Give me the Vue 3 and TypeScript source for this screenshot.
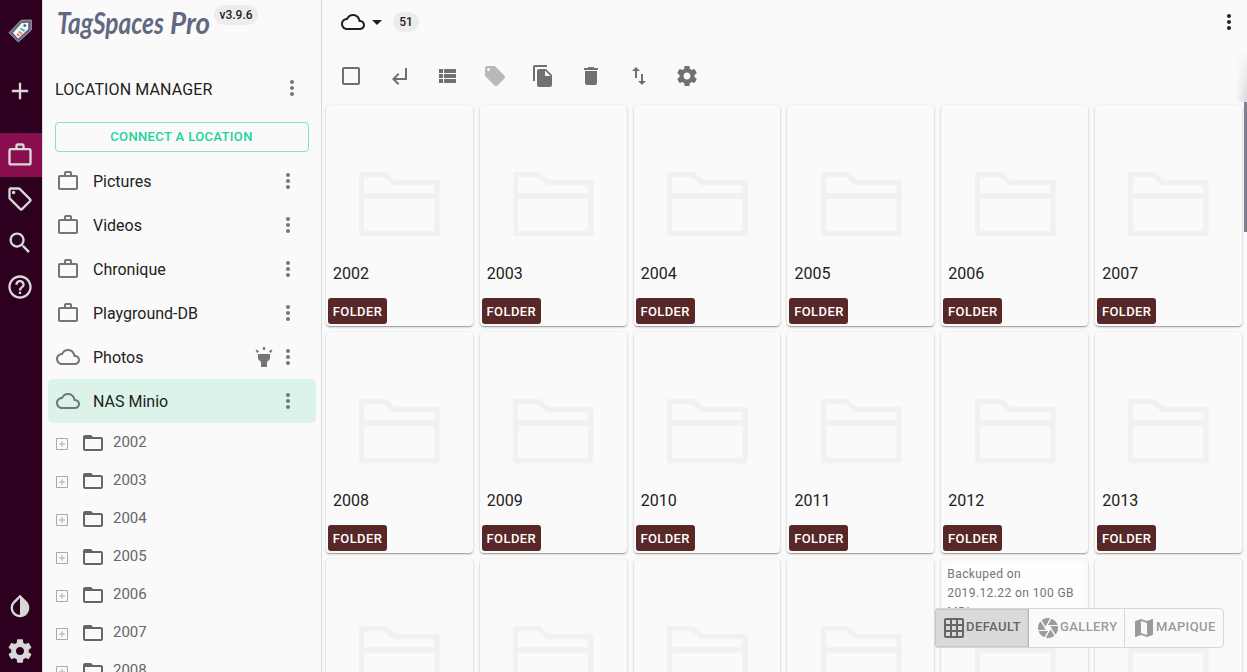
<script setup lang="ts">
interface Location { name: string; cloud?: boolean; lit?: boolean; selected?: boolean }
interface Action { id: string; faded?: boolean }

const icons: Record<string, string> = {
  add: 'M19 13h-6v6h-2v-6H5v-2h6V5h2v6h6v2z',
  work: 'M14 6V4h-4v2h4zM4 8v11h16V8H4zm16-2c1.11 0 2 .89 2 2v11c0 1.11-.89 2-2 2H4c-1.11 0-2-.89-2-2l.01-11c0-1.11.88-2 1.99-2h4V4c0-1.11.89-2 2-2h4c1.11 0 2 .89 2 2v2h4z',
  tagOutline: 'M21.41 11.58l-9-9C12.05 2.22 11.55 2 11 2H4c-1.1 0-2 .9-2 2v7c0 .55.22 1.05.59 1.42l9 9c.36.36.86.58 1.41.58s1.05-.22 1.41-.59l7-7c.37-.36.59-.86.59-1.41s-.23-1.06-.59-1.42zM13 20.01L4 11V4h7v-.01l9 9-7 7.02zM6.5 5a1.5 1.5 0 1 0 0 3 1.5 1.5 0 0 0 0-3z',
  search: 'M15.5 14h-.79l-.28-.27C15.41 12.59 16 11.11 16 9.5 16 5.91 13.09 3 9.5 3S3 5.91 3 9.5 5.91 16 9.5 16c1.61 0 3.09-.59 4.23-1.57l.27.28v.79l5 4.99L20.49 19l-4.99-5zm-6 0C7.01 14 5 11.99 5 9.5S7.01 5 9.5 5 14 7.01 14 9.5 11.99 14 9.5 14z',
  help: 'M11 18h2v-2h-2v2zm1-16C6.48 2 2 6.48 2 12s4.48 10 10 10 10-4.48 10-10S17.52 2 12 2zm0 18c-4.41 0-8-3.59-8-8s3.59-8 8-8 8 3.59 8 8-3.59 8-8 8zm0-14c-2.21 0-4 1.79-4 4h2c0-1.1.9-2 2-2s2 .9 2 2c0 2-3 1.75-3 5h2c0-2.25 3-2.5 3-5 0-2.21-1.79-4-4-4z',
  invert: 'M17.66 7.93L12 2.27 6.34 7.93c-3.12 3.12-3.12 8.19 0 11.31C7.9 20.8 9.95 21.58 12 21.58c2.05 0 4.1-.78 5.66-2.34 3.12-3.12 3.12-8.19 0-11.31zM12 19.59c-1.6 0-3.11-.62-4.24-1.76C6.62 16.69 6 15.19 6 13.59s.62-3.11 1.76-4.24L12 5.1v14.49z',
  settings: 'M19.43 12.98c.04-.32.07-.64.07-.98s-.03-.66-.07-.98l2.11-1.65c.19-.15.24-.42.12-.64l-2-3.46c-.12-.22-.39-.3-.61-.22l-2.49 1c-.52-.4-1.08-.73-1.69-.98l-.38-2.65C14.46 2.18 14.25 2 14 2h-4c-.25 0-.46.18-.49.42l-.38 2.65c-.61.25-1.17.59-1.69.98l-2.49-1c-.23-.09-.49 0-.61.22l-2 3.46c-.13.22-.07.49.12.64l2.11 1.65c-.04.32-.07.65-.07.98s.03.66.07.98l-2.11 1.65c-.19.15-.24.42-.12.64l2 3.46c.12.22.39.3.61.22l2.49-1c.52.4 1.08.73 1.69.98l.38 2.65c.03.24.24.42.49.42h4c.25 0 .46-.18.49-.42l.38-2.65c.61-.25 1.17-.59 1.69-.98l2.49 1c.23.09.49 0 .61-.22l2-3.46c.12-.22.07-.49-.12-.64l-2.11-1.65zM12 15.5c-1.93 0-3.5-1.57-3.5-3.5s1.57-3.5 3.5-3.5 3.5 1.57 3.5 3.5-1.57 3.5-3.5 3.5z',
  cloud: 'M19.35 10.04C18.67 6.59 15.64 4 12 4 9.11 4 6.6 5.64 5.35 8.04 2.34 8.36 0 10.91 0 14c0 3.31 2.69 6 6 6h13c2.76 0 5-2.24 5-5 0-2.64-2.05-4.78-4.65-4.96zM19 18H6c-2.21 0-4-1.79-4-4 0-2.05 1.53-3.76 3.56-3.97l1.07-.11.5-.95C8.08 7.14 9.94 6 12 6c2.62 0 4.88 1.86 5.39 4.43l.3 1.5 1.53.11c1.56.1 2.78 1.41 2.78 2.96 0 1.65-1.35 3-3 3z',
  more: 'M12 8c1.1 0 2-.9 2-2s-.9-2-2-2-2 .9-2 2 .9 2 2 2zm0 2c-1.1 0-2 .9-2 2s.9 2 2 2 2-.9 2-2-.9-2-2-2zm0 6c-1.1 0-2 .9-2 2s.9 2 2 2 2-.9 2-2-.9-2-2-2z',
  highlight: 'M6 14l3 3v5h6v-5l3-3V9H6zm5-12h2v3h-2zM3.5 5.875L4.914 4.46l2.12 2.122L5.62 7.997zm13.46.71l2.123-2.12 1.414 1.414L18.375 8z',
  folder: 'M20 6h-8l-2-2H4c-1.1 0-1.99.9-1.99 2L2 18c0 1.1.9 2 2 2h16c1.1 0 2-.9 2-2V8c0-1.1-.9-2-2-2zm0 12H4V8h16v10z',
  drop: 'M7 10l5 5 5-5z',
  checkbox: 'M19 5v14H5V5h14m0-2H5c-1.1 0-2 .9-2 2v14c0 1.1.9 2 2 2h14c1.1 0 2-.9 2-2V5c0-1.1-.9-2-2-2z',
  parent: 'M11 9l1.42 1.42L8.83 14H18V4h2v12H8.83l3.59 3.58L11 21l-6-6 6-6z',
  list: 'M4 14h4v-4H4v4zm0 5h4v-4H4v4zM4 9h4V5H4v4zm5 5h12v-4H9v4zm0 5h12v-4H9v4zM9 5v4h12V5H9z',
  tag: 'M21.41 11.58l-9-9C12.05 2.22 11.55 2 11 2H4c-1.1 0-2 .9-2 2v7c0 .55.22 1.05.59 1.42l9 9c.36.36.86.58 1.41.58.55 0 1.05-.22 1.41-.59l7-7c.37-.36.59-.86.59-1.41 0-.55-.23-1.06-.59-1.42zM5.5 7C4.67 7 4 6.33 4 5.5S4.67 4 5.5 4 7 4.67 7 5.5 6.33 7 5.5 7z',
  copy: 'M16 1H4c-1.1 0-2 .9-2 2v14h2V3h12V1zm-1 4l6 6v10c0 1.1-.9 2-2 2H7.99C6.89 23 6 22.1 6 21l.01-14c0-1.1.89-2 1.99-2h7zm-1 7h5.5L14 6.5V12z',
  trash: 'M6 19c0 1.1.9 2 2 2h8c1.1 0 2-.9 2-2V7H6v12zM19 4h-3.5l-1-1h-5l-1 1H5v2h14V4z',
  sort: 'M16 17.01V10h-2v7.01h-3L15 21l4-3.99h-3zM9 3L5 6.99h3V14h2V6.99h3L9 3z',
  grid: 'M20 2H4c-1.1 0-2 .9-2 2v16c0 1.1.9 2 2 2h16c1.1 0 2-.9 2-2V4c0-1.1-.9-2-2-2zM8 20H4v-4h4v4zm0-6H4v-4h4v4zm0-6H4V4h4v4zm6 12h-4v-4h4v4zm0-6h-4v-4h4v4zm0-6h-4V4h4v4zm6 12h-4v-4h4v4zm0-6h-4v-4h4v4zm0-6h-4V4h4v4z',
  camera: 'M9.4 10.5l4.77-8.26C13.47 2.09 12.75 2 12 2c-2.4 0-4.6.85-6.32 2.25l3.66 6.35.06-.1zM21.54 9c-.92-2.92-3.15-5.26-6-6.34L11.88 9h9.66zm.26 1h-7.49l.29.5 4.76 8.25C21 16.97 22 14.61 22 12c0-.69-.07-1.35-.2-2zM8.54 12l-3.9-6.75C3.01 7.03 2 9.39 2 12c0 .69.07 1.35.2 2h7.49l-1.15-2zm-6.08 3c.92 2.92 3.15 5.26 6 6.34L12.12 15H2.46zm11.27 0l-3.9 6.76c.7.15 1.42.24 2.17.24 2.4 0 4.6-.85 6.32-2.25l-3.66-6.35-.93 1.6z',
  map: 'M20.5 3l-.16.03L15 5.1 9 3 3.36 4.9c-.21.07-.36.25-.36.48V20.5c0 .28.22.5.5.5l.16-.03L9 18.9l6 2.1 5.64-1.9c.21-.07.36-.25.36-.48V3.5c0-.28-.22-.5-.5-.5zM15 19l-6-2.11V5l6 2.11V19z',
}

const nav: string[] = ['work', 'tagOutline', 'search', 'help']
const locations: Location[] = [
  { name: 'Pictures' },
  { name: 'Videos' },
  { name: 'Chronique' },
  { name: 'Playground-DB' },
  { name: 'Photos', cloud: true, lit: true },
  { name: 'NAS Minio', cloud: true, selected: true },
]
const tree: number[] = [2002, 2003, 2004, 2005, 2006, 2007, 2008]
const actions: Action[] = [
  { id: 'checkbox' }, { id: 'parent' }, { id: 'list' }, { id: 'tag', faded: true },
  { id: 'copy' }, { id: 'trash' }, { id: 'sort' }, { id: 'settings' },
]
const folders: number[] = Array.from({ length: 18 }, (_, i) => 2002 + i)
const notes: Record<number, string> = { 2018: 'Backuped on 2019.12.22 on 100 GB MDisc' }
const views = [
  { id: 'grid', label: 'DEFAULT' },
  { id: 'camera', label: 'GALLERY' },
  { id: 'map', label: 'MAPIQUE' },
]
</script>

<template>
  <div class="app">
    <nav class="rail">
      <svg class="brand-mark" viewBox="0 0 24 24">
        <path d="M13 1.300L23.300 1V11L10.300 23 1 13.700z" fill="#616880" stroke="#b9bcc6" stroke-width=".8" />
        <path d="M13.500 4.200L20.200 3.700V10L10.200 19.500 5 14z" fill="#f7f8fa" />
        <circle cx="16.800" cy="6.600" r="1.500" fill="#616880" />
        <path d="M12.500 9.500l4 2.500" stroke="#24b9cd" stroke-width="2" />
        <path d="M10.500 12.500l3.500 2.500" stroke="#f59a23" stroke-width="2.200" />
        <path d="M9 15l2.500 2" stroke="#b64ea2" stroke-width="1.500" />
      </svg>
      <div class="rail-item rail-add"><svg class="big" viewBox="0 0 24 24"><path :d="icons.add" /></svg></div>
      <div v-for="n in nav" :key="n" class="rail-item" :class="{ current: n === 'work' }">
        <svg class="big" viewBox="0 0 24 24"><path :d="icons[n]" /></svg>
      </div>
      <div class="rail-gap"></div>
      <div class="rail-item"><svg class="big" viewBox="0 0 24 24"><path :d="icons.invert" /></svg></div>
      <div class="rail-item rail-last"><svg class="big" viewBox="0 0 24 24"><path :d="icons.settings" /></svg></div>
    </nav>

    <aside class="side">
      <header class="brand">
        <svg class="wordmark" viewBox="0 0 158 50">
          <text x="2" y="34" textLength="107" lengthAdjust="spacingAndGlyphs">TagSpaces</text>
          <text x="115" y="34" textLength="40" lengthAdjust="spacingAndGlyphs">Pro</text>
        </svg>
        <span class="chip version">v3.9.6</span>
      </header>
      <div class="side-title">
        <span>LOCATION MANAGER</span>
        <svg class="icon" viewBox="0 0 24 24"><path :d="icons.more" /></svg>
      </div>
      <button class="connect">CONNECT A LOCATION</button>
      <div class="locations">
        <div v-for="l in locations" :key="l.name" class="location" :class="{ selected: l.selected }">
          <svg class="icon" viewBox="0 0 24 24"><path :d="l.cloud ? icons.cloud : icons.work" /></svg>
          <span class="location-name">{{ l.name }}</span>
          <svg v-if="l.lit" class="icon" viewBox="0 0 24 24"><path :d="icons.highlight" /></svg>
          <svg class="icon" viewBox="0 0 24 24"><path :d="icons.more" /></svg>
        </div>
      </div>
      <div class="tree">
        <div v-for="y in tree" :key="y" class="branch">
          <svg class="expander" viewBox="0 0 12 12"><path d="M.5.5h11v11H.5zM3 6h6M6 3v6" /></svg>
          <svg class="icon" viewBox="0 0 24 24"><path :d="icons.folder" /></svg>
          <span>{{ y }}</span>
        </div>
      </div>
    </aside>

    <main class="main">
      <header class="topbar">
        <svg class="icon" viewBox="0 0 24 24"><path :d="icons.cloud" /></svg>
        <svg class="icon" viewBox="0 0 24 24"><path :d="icons.drop" /></svg>
        <span class="chip count">51</span>
        <span class="spring"></span>
        <svg class="icon" viewBox="0 0 24 24"><path :d="icons.more" /></svg>
      </header>
      <div class="toolbar">
        <svg v-for="a in actions" :key="a.id" class="icon" :class="{ faded: a.faded }" viewBox="0 0 24 24">
          <path :d="icons[a.id]" />
        </svg>
      </div>
      <div class="edge-shade"></div>
      <section class="cards">
        <article v-for="f in folders" :key="f" class="card">
          <p v-if="notes[f]" class="note">{{ notes[f] }}</p>
          <svg class="folder-art" viewBox="0 0 81 65">
            <path d="M2.500 2.500H25.500L35 10.500H78V61.500H2.500zM2.500 24H78" />
          </svg>
          <div class="card-name">{{ f }}</div>
          <span class="badge">FOLDER</span>
        </article>
      </section>
      <div class="scrollbar"></div>
      <div class="views">
        <button v-for="(v, i) in views" :key="v.id" class="view" :class="{ active: i === 0 }">
          <svg class="icon" viewBox="0 0 24 24"><path :d="icons[v.id]" /></svg>
          <span>{{ v.label }}</span>
        </button>
      </div>
    </main>
  </div>
</template>

<style>
body { margin: 0; overflow: hidden; }
</style>

<style scoped>
.app {
  display: flex;
  width: 1247px;
  height: 672px;
  overflow: hidden;
  background: #fafafa;
  color: #212121;
  font: 16px/24px Roboto, sans-serif;
}
.app * { box-sizing: border-box; }
svg { display: block; flex: none; fill: currentColor; }
button { font-family: inherit; background: none; margin: 0; }
.icon { width: 24px; height: 24px; }
.big { width: 28px; height: 28px; }
.chip {
  display: inline-flex;
  align-items: center;
  justify-content: center;
  height: 20px;
  border-radius: 10px;
  background: #ececec;
  font-size: 12px;
  font-weight: 500;
}

.rail {
  display: flex;
  flex: none;
  flex-direction: column;
  width: 42px;
  padding: 19px 0 0;
  background: #2c001e;
  color: #d8d8d8;
}
.brand-mark { width: 24px; height: 24px; margin-left: 8px; }
.rail-item {
  display: flex;
  flex: none;
  align-items: center;
  height: 44px;
  padding-left: 6px;
}
.rail-add { margin: 26px 0 20px; }
.rail-last { padding-top: 2px; }
.current { background: #880e4f; }
.rail-gap { flex: 1; }

.side {
  flex: none;
  width: 280px;
  height: 672px;
  overflow: hidden;
  border-right: 1px solid #d9d9d9;
  border-left: 1px solid #e0e0e0;
}
.brand { display: flex; height: 55px; padding-left: 12px; }
.wordmark { width: 158px; height: 50px; overflow: visible; fill: #616880; }
.wordmark text {
  font-family: Lato, sans-serif;
  font-size: 31px;
  font-style: italic;
  font-weight: 700;
}
.version { width: 44px; margin: 5px 0 0 1px; }
.side-title {
  display: flex;
  align-items: center;
  justify-content: space-between;
  height: 66px;
  padding: 1px 17px 0 12px;
}
.side-title span { padding-top: 2px; letter-spacing: .12px; }
.side-title .icon { margin-top: -2px; }
.side-title .icon, .location .icon { color: #757575; }
.connect {
  display: block;
  width: 254px;
  height: 30px;
  margin: 1px 0 7px 12px;
  padding: 0 1px 2px 0;
  border: 1px solid #86e3c4;
  border-radius: 4px;
  color: #1dd19f;
  font-size: 13px;
  font-weight: 500;
  letter-spacing: .37px;
}
.location {
  display: flex;
  align-items: center;
  width: 268px;
  height: 44px;
  margin-left: 5px;
  padding: 0 16px 0 8px;
  border-radius: 5px;
}
.location.selected { background: #dcf3ea; }
.location-name { flex: 1; padding: 2px 0 0 13px; }
.branch {
  display: flex;
  align-items: center;
  height: 38px;
  padding-left: 13px;
  color: #666;
}
.expander { width: 12px; height: 12px; margin: 3px 13px 0 0; fill: none; stroke: #aaa; }
.branch .icon { margin-top: 2px; }
.branch span { padding: 0 0 1px 8px; font-size: 15px; }

.main { position: relative; flex: 1; height: 672px; overflow: hidden; }
.topbar { display: flex; align-items: center; height: 44px; padding: 0 6px 0 19px; }
.count { width: 26px; margin-left: 4px; }
.spring { flex: 1; }
.toolbar {
  display: flex;
  align-items: center;
  gap: 24px;
  height: 61px;
  padding: 2px 0 0 17px;
  color: #707070;
}
.faded { color: #b9b9b9; }
.edge-shade {
  position: absolute;
  top: 50px;
  right: 0;
  width: 11px;
  height: 52px;
  background: linear-gradient(to left, rgba(90, 95, 115, .22), rgba(90, 95, 115, 0));
  mask-image: linear-gradient(to bottom, transparent, #000);
}
.cards {
  display: grid;
  grid-template-columns: repeat(6, 1fr);
  grid-auto-rows: 221px;
  gap: 6px 7px;
  width: 916px;
  margin-left: 4px;
}
.card {
  position: relative;
  padding: 67px 2px 0;
  border-radius: 4px;
  background: #fafafa;
  box-shadow: 0 1px 3px rgba(0, 0, 0, .2), 0 1px 1px rgba(0, 0, 0, .14), 0 2px 1px -1px rgba(0, 0, 0, .12);
}
.folder-art {
  width: 81px;
  height: 65px;
  margin-left: 31.3px;
  fill: none;
  stroke: #f1f1f1;
  stroke-width: 5.3;
  stroke-linejoin: round;
}
.card-name { margin: 25px 0 12px 5px; }
.badge {
  display: flex;
  align-items: center;
  justify-content: center;
  width: 59px;
  height: 26px;
  padding-top: 2px;
  border-radius: 3px;
  background: #582727;
  color: #fff;
  font-size: 13px;
  font-weight: 500;
  letter-spacing: .4px;
}
.note {
  position: absolute;
  top: 4px;
  left: 4px;
  width: 139px;
  height: 85px;
  margin: 0;
  padding: 2px 2px 0;
  background: rgba(255, 255, 255, .8);
  color: #757575;
  font-size: 12px;
  line-height: 19px;
  letter-spacing: .4px;
}
.scrollbar {
  position: absolute;
  top: 102px;
  right: 0;
  width: 3px;
  height: 130px;
  background: #7c808f;
}
.views {
  position: absolute;
  top: 608px;
  right: 23px;
  display: flex;
  width: 290px;
  height: 40px;
  overflow: hidden;
  border: 1px solid #d8d8d8;
  border-radius: 4px;
  background: #fafafa;
}
.view {
  display: flex;
  align-items: center;
  width: 96px;
  padding: 0 0 0 7px;
  border: 0;
  border-right: 1px solid #d8d8d8;
  color: #9b9b9b;
  font-size: 13px;
  font-weight: 500;
  letter-spacing: .4px;
}
.view span { padding-bottom: 4px; }
.view:last-child { flex: 1; border-right: 0; }
.view.active {
  width: 94px;
  border-right-color: #bdbdbd;
  background: #dadada;
  box-shadow: inset 0 0 0 1px #c8c8c8;
  color: #666;
}
</style>
